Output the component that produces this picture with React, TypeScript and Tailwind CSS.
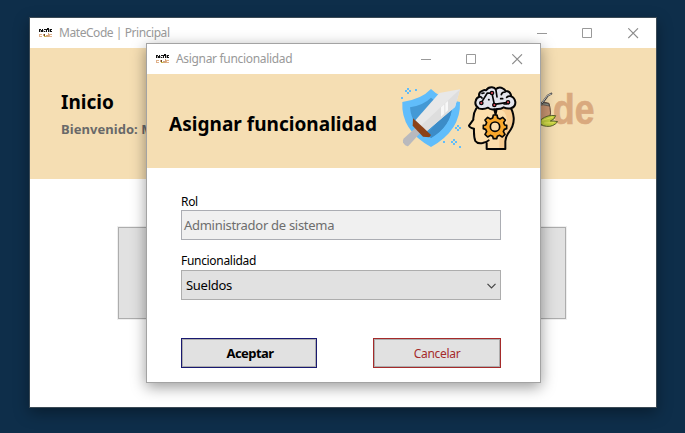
import type { ReactNode } from "react";

function AppIcon() {
  return (
    <svg className="-mt-[2px] h-[11px] w-[14px] shrink-0" viewBox="0 0 14 11" shapeRendering="crispEdges" aria-hidden="true">
      <path d="M0 2h1v3H0zM1 2h1v1H1zM2 3h1v2H2zM3 2h1v3H3zM5 2h2v1H5zM5 4h1v1H5zM7 2h1v3H7zM8 1h1v2H8zM9 1h1v4H9zM11 2h2v1h-2zM11 3h1v2h-1zM12 4h1v1h-1z" fill="#111" />
      <path d="M1 3h1v2H1zM4 3h1v2H4zM6 4h1v1H6zM10 2h1v3h-1z" fill="#aaa" />
      <path d="M0 7h3v1H1v1h2v1H0zM10 7h3v1h-2v1h2v1h-3z" fill="#e0b28c" />
      <path d="M4 7h2v2H4zM7 8h2V6h1v4H7z" fill="#d5a67e" />
      <path d="M5 7h1v2H5z" fill="#6a4b2b" />
      <path d="M5 9h2v1H5z" fill="#c9bd3c" />
    </svg>
  );
}

function WindowControls() {
  return (
    <div className="ml-auto flex h-full">
      <span className="flex w-[45px] items-center pl-[18px]">
        <svg width="11" height="11" viewBox="0 0 11 11" shapeRendering="crispEdges">
          <path d="M0 5h10v1H0z" fill="#999" />
        </svg>
      </span>
      <span className="flex w-[46px] items-center pl-[18px]">
        <svg width="11" height="11" viewBox="0 0 11 11">
          <path d="M.5.5h9v9h-9z" fill="none" stroke="#999" />
        </svg>
      </span>
      <span className="flex w-[46px] items-center pl-[18px]">
        <svg width="11" height="11" viewBox="0 0 11 11">
          <path d="M.3.300l9.700 9.700M10 .3L.3 10" fill="none" stroke="#8c8c8c" strokeWidth="1.100" />
        </svg>
      </span>
    </div>
  );
}

function TitleBar({ children, className }: { children: ReactNode; className: string }) {
  return (
    <div className={`flex shrink-0 items-center bg-white text-[12px] text-[#999] ${className}`}>
      <AppIcon />
      {children}
      <WindowControls />
    </div>
  );
}

function ShieldIcon() {
  return (
    <svg className="h-[80px] w-[67px]" viewBox="0 0 201 240">
      <path d="M108 33Q135 62 195 72Q198 157 108 207Q17 157 22 72Q79 64 108 33Z" fill="#60bdfb" />
      <path d="M108 59Q131 80 171 88Q167 145 108 180Q49 145 45 88Q86 81 108 59Z" fill="#4499d5" />
      <path d="M171 88Q167 145 108 180L100 164L160 90Z" fill="#3c8cc8" />
      <path d="M195 34L133 45L61 127L92 162L180 87Z" fill="#e8e8e8" />
      <path d="M195 34L76 145L92 162L180 87Z" fill="#dedede" />
      <path d="M138 88l10-9v28l-10 9zM151 76l8-7v28l-8 8z" fill="#f8f8f8" />
      <path d="M61 150L75 166L40 204Q32 207 24 193Q21 187 27 181Z" fill="#b9b9bd" />
      <path d="M54 121L87 151L108 171L103 178L84 176L53 143Z" fill="#8c4218" />
      <g fill="#60bdfb">
        <path d="M36 30h6v6h-6zM30 36h6v6h-6zM42 36h6v6h-6zM36 42h6v6h-6zM60 33h6v6h-6zM18 57h6v6h-6z" />
        <path d="M186 141h6v6h-6zM180 147h6v6h-6zM192 147h6v6h-6zM186 153h6v6h-6zM174 183h6v6h-6zM168 189h6v6h-6zM180 189h6v6h-6zM174 195h6v6h-6zM144 189h6v6h-6zM192 204h6v6h-6z" />
      </g>
    </svg>
  );
}

function MindIcon() {
  return (
    <svg className="h-[80px] w-[65px]" viewBox="0 0 195 240" fill="none" stroke="#050505" strokeLinecap="round" strokeLinejoin="round">
      <path d="M43 91Q33 107 34 125L21 143Q22 149 36 152Q35 177 40 189Q47 200 74 195V214H130V190Q130 178 139 165Q157 143 155 119Q153 99 145 86Z" fill="#fddeab" stroke="none" />
      <path d="M112 91H145Q158 113 153 138Q149 152 139 165Q130 178 130 190V214H112V190Q112 170 127 150Q142 124 127 102Z" fill="#f8cc91" stroke="none" />
      <path d="M43 91Q33 107 34 125L21 143Q22 149 36 152Q35 177 40 189Q46 198 62 195Q76 191 80 187M74 196V213H130V190Q130 178 139 165Q157 143 155 119Q153 99 145 88" strokeWidth="6" />
      <path d="M50 91Q37 82 41 69Q43 58 52 56Q48 43 62 38Q68 35 72 37Q79 27 90 28Q98 29 101 34Q111 25 122 31Q128 34 131 39Q145 39 148 55Q158 59 160 72Q161 87 146 91Q134 93 125 88Q115 94 104 93L101 107Q98 101 97 94Q85 96 78 89Q64 96 50 91Z" fill="#e4e5ed" strokeWidth="6" />
      <path d="M58 74L76 45L90 46L97 79L138 73M102 37L105 57M52 56Q57 55 60 60M130 42Q119 42 118 50M148 55Q139 53 134 58M100 93V112" strokeWidth="5" />
      <path d="M116 62h6M80 65h1M126 78h8M60 46l6-1" strokeWidth="5" />
      <g fill="#e94759" strokeWidth="4">
        <circle cx="58" cy="75" r="5" />
        <circle cx="90" cy="45" r="5" />
        <circle cx="97" cy="81" r="5" />
        <circle cx="138" cy="73" r="5" />
      </g>
      <path d="M94 111h11l2 9 7 3 8-5 8 8-5 8 3 7 6 1v10l-7 2-3 7 5 8-8 8-8-5-7 3-2 7H94l-2-7-7-3-8 5-8-8 5-8-3-7-7-2v-10l7-1 3-7-5-8 8-8 8 5 7-3z" fill="#f9a72b" strokeWidth="5" />
      <circle cx="99" cy="146" r="14" fill="#fddeab" strokeWidth="5" />
    </svg>
  );
}

function BrandMark() {
  return (
    <svg className="h-[60px] w-[85px]" viewBox="0 0 255 180">
      <path d="M36 71Q52 62 72 70L75 83Q82 116 58 134L36 137Z" fill="#c99572" stroke="#60493b" strokeWidth="3" />
      <path d="M38 72Q55 65 71 71L73 78Q54 71 37 78Z" fill="#8f9288" stroke="#444" strokeWidth="2" />
      <path d="M51 70L68 47L79 41" fill="none" stroke="#3f3f3f" strokeWidth="6" strokeLinecap="round" />
      <path d="M51 69L67 47L78 42" fill="none" stroke="#ccc" strokeWidth="3" strokeLinecap="round" />
      <text x="84" y="131" textLength="124" lengthAdjust="spacingAndGlyphs" fill="#d9a97e" stroke="#d9a97e" strokeWidth="2" fontFamily="Liberation Sans, Arial, sans-serif" fontSize="127" fontWeight="700">de</text>
      <path d="M48 119Q68 103 92 107Q89 119 76 123Q87 122 98 125Q85 141 65 139Q53 139 47 131Z" fill="#c3d23f" stroke="#59602d" strokeWidth="3" />
      <path d="M52 121L84 111M57 129L88 128" stroke="#e4e35b" strokeWidth="3" />
    </svg>
  );
}

function MainWindow() {
  return (
    <section className="absolute left-[29px] top-[17px] flex h-[391px] w-[628px] flex-col border border-[#3b4a55] bg-white shadow-[0_5px_14px_rgba(0,0,0,0.35)]">
      <TitleBar className="h-[30px] pl-[9px]">
        <span className="ml-[6px] tracking-[-0.44px]">MateCode | Principal</span>
      </TitleBar>
      <header className="flex h-[131px] shrink-0 bg-[#f5deb3] pl-[31px]">
        <div className="w-[464px] pt-[40px]">
          <h1 className="text-[19px] font-bold leading-[28px] text-black">Inicio</h1>
          <p className="text-[13px] font-bold leading-[26px] tracking-[0.05px] text-[#696969]">Bienvenido: M</p>
        </div>
        <div className="pt-[32px]">
          <BrandMark />
        </div>
      </header>
      <div className="flex pl-[88px] pt-[48px]">
        <button className="h-[92px] w-[448px] border border-[#adadad] bg-[#e1e1e1] ring-1 ring-[#efefef]" aria-label="Inicio" />
      </div>
    </section>
  );
}

function AssignDialog() {
  return (
    <section className="absolute left-[146px] top-[43px] flex h-[340px] w-[395px] flex-col border border-[#a3a3a3] bg-white shadow-[0_4px_14px_rgba(0,0,0,0.4)]">
      <TitleBar className="h-[30px] pl-[9px]">
        <span className="ml-[6px] tracking-[-0.32px]">Asignar funcionalidad</span>
      </TitleBar>
      <header className="flex h-[94px] shrink-0 bg-[#f5deb3] pl-[22px]">
        <h2 className="w-[226px] whitespace-nowrap pt-[35px] text-[19px] font-bold leading-[30px] tracking-[0.03px] text-black">Asignar funcionalidad</h2>
        <div className="flex pt-[4px]">
          <ShieldIcon />
          <MindIcon />
        </div>
      </header>
      <form className="flex flex-col pl-[34px] pr-[39px] pt-[25px]">
        <label className="h-[17px] text-[12px] leading-[18px] tracking-[-0.3px] text-black">Rol</label>
        <div className="flex h-[30px] items-center border border-[#abadb3] bg-[#f0f0f0] pl-[2px] pt-[2px] text-[13px] tracking-[-0.29px] text-[#6d6d6d]">
          <span>Administrador de sistema</span>
        </div>
        <label className="mt-[12px] h-[18px] text-[12px] leading-[18px] tracking-[-0.31px] text-black">Funcionalidad</label>
        <div className="flex h-[30px] items-center justify-between border border-[#adadad] bg-[#e1e1e1] px-[4px] pt-[2px] text-[13px] tracking-[-0.28px] text-black">
          <span>Sueldos</span>
          <svg width="9" height="6" viewBox="0 0 9 6">
            <path d="M.5.800l4 4 4-4" fill="none" stroke="#444" strokeWidth="1.200" />
          </svg>
        </div>
        <div className="mt-[38px] flex justify-between">
          <button type="button" className="h-[30px] w-[136px] border border-[#191970] bg-[#e1e1e1] pl-[2px] pt-[2px] text-[13px] font-bold tracking-[-0.55px] text-black shadow-[inset_0_0_0_1px_#adadad]">Aceptar</button>
          <button type="button" className="h-[30px] w-[128px] border border-[#a52a2a] bg-[#e1e1e1] pt-[2px] text-[12px] tracking-[-0.3px] text-[#a52a2a] shadow-[inset_0_0_0_1px_#adadad]">Cancelar</button>
        </div>
      </form>
    </section>
  );
}

export default function App() {
  return (
    <main className="relative h-[433px] w-[685px] overflow-hidden bg-[#0e2e4a] font-['Noto_Sans','Open_Sans',sans-serif]">
      <MainWindow />
      <AssignDialog />
    </main>
  );
}
